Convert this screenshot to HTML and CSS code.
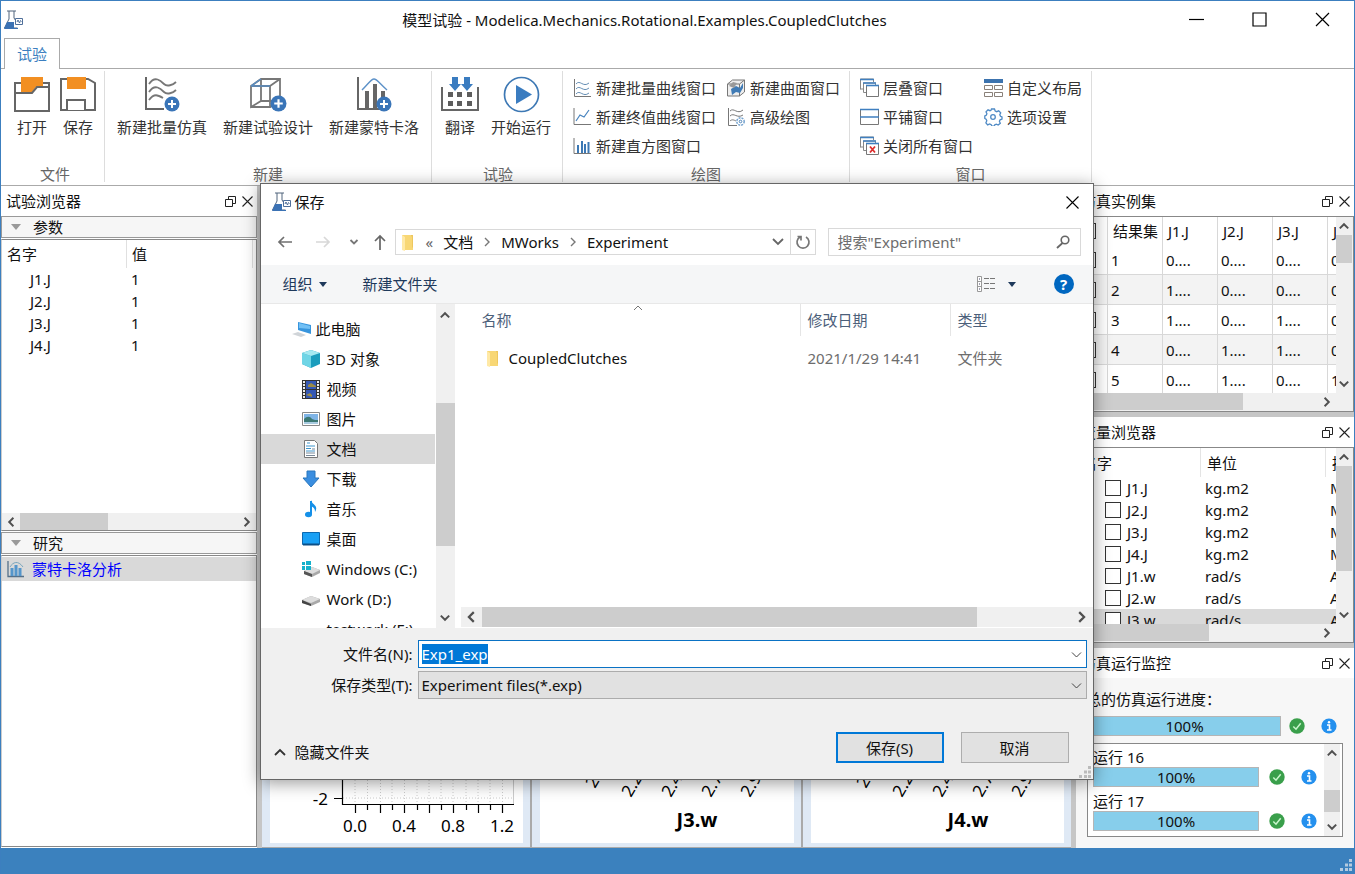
FILE: index.html
```html
<!DOCTYPE html>
<html lang="zh-CN">
<head>
<meta charset="utf-8">
<title>模型试验</title>
<link rel="stylesheet" href="styles.css">
</head>
<body>
<svg class="defs" aria-hidden="true">
  <symbol id="flask" viewBox="0 0 20 20">
    <path d="M4 1h9M6 1v8L1.5 18h13" fill="none" stroke="#51657d"/>
    <path d="M11 1v7l2 3" fill="none" stroke="#51657d"/>
    <path d="M4 12h7v6h4v1H1z" fill="#3b72b4"/>
    <path d="M12.500 8.500h7v6h-7z" fill="#fff" stroke="#4f6f9a"/>
    <path d="M14 12l1-2 1.500 3 1-2.500 1 1" fill="none" stroke="#4f6f9a"/>
  </symbol>
  <symbol id="plus" viewBox="0 0 16 16"><circle cx="8" cy="8" r="7.500" fill="#3a75b8"/><path d="M8 4v8M4 8h8" stroke="#fff" stroke-width="2"/></symbol>
  <symbol id="up" viewBox="0 0 10 10"><path d="M1.500 7L5 3.500 8.500 7" fill="none" stroke="#505050" stroke-width="1.600"/></symbol>
  <symbol id="down" viewBox="0 0 10 10"><path d="M1.500 3L5 6.500 8.500 3" fill="none" stroke="#505050" stroke-width="1.600"/></symbol>
  <symbol id="left" viewBox="0 0 10 10"><path d="M7 1.500L3.500 5 7 8.500" fill="none" stroke="#505050" stroke-width="1.600"/></symbol>
  <symbol id="right" viewBox="0 0 10 10"><path d="M3 1.500L6.500 5 3 8.500" fill="none" stroke="#505050" stroke-width="1.600"/></symbol>
  <symbol id="float" viewBox="0 0 11 11"><path d="M.5 3.500h7v7h-7zM3.500 3.500v-3h7v7h-3" fill="none" stroke="#222"/></symbol>
  <symbol id="close" viewBox="0 0 11 11"><path d="M.5.5l10 10M10.500.5l-10 10" fill="none" stroke="#222" stroke-width="1.100"/></symbol>
  <symbol id="folder" viewBox="0 0 13 17"><path d="M1 1h8l3 2v13H1z" fill="#f8d775"/><path d="M1 1l3 2v14l-3-1z" fill="#ffe9a6"/><path d="M9 1h3v13l-1-1V3z" fill="#eec75e"/></symbol>
  <symbol id="ok" viewBox="0 0 16 16"><circle cx="8" cy="8" r="7.700" fill="#3a9f4b"/><path d="M4.300 8.500l2.700 2.700 4.700-6" fill="none" stroke="#c9f5cc" stroke-width="1.500"/></symbol>
  <symbol id="info" viewBox="0 0 16 16"><circle cx="8" cy="8" r="7.600" fill="#2490ee"/><path d="M6 7h2.500v5M6 12h4.500" fill="none" stroke="#fff" stroke-width="1.600"/><circle cx="8" cy="4.300" r="1.200" fill="#fff"/></symbol>
  <symbol id="waves" viewBox="0 0 18 18"><path d="M1.500 0v17.500H18" fill="none" stroke="#777"/><path d="M3 5c4-5 7 4 13-1M3 10c4-5 7 4 13-1M3 15c4-5 7 4 13-1" fill="none" stroke="#668fb5"/></symbol>
  <symbol id="cascade" viewBox="0 0 19 19"><path d="M.5 11.500V1h13v3M3.500 14.500V5h12v2M.5 11h3M3.500 14.500h3" fill="none" stroke="#888"/><path d="M0 1.500h14M3 5h13" stroke="#3f7fc0" stroke-width="1.600"/><path d="M6.500 8v10.500h12V8" fill="#fff" stroke="#777"/><path d="M6 7.500h13" stroke="#3f7fc0" stroke-width="1.600"/></symbol>
  <symbol id="grip" viewBox="0 0 12 12"><path d="M9 0h3v3H9zM5 4.500h3v3H5zM9 4.500h3v3H9zM0 9h3v3H0zM5 9h3v3H5zM9 9h3v3H9z"/></symbol>
</svg>

<header class="titlebar">
  <svg class="app-icon" width="20" height="20"><use href="#flask"/></svg>
  <h1 class="title">模型试验 - Modelica.Mechanics.Rotational.Examples.CoupledClutches</h1>
  <div class="win-buttons">
    <button aria-label="最小化"><svg width="15" height="15"><path d="M0 7.500h15" stroke="#000" stroke-width="1.200"/></svg></button>
    <button aria-label="最大化"><svg width="15" height="15"><path d="M1 1h13v13H1z" fill="none" stroke="#000" stroke-width="1.200"/></svg></button>
    <button aria-label="关闭"><svg width="15" height="15"><path d="M1 1l13 13M14 1L1 14" stroke="#000" stroke-width="1.200"/></svg></button>
  </div>
</header>
<nav class="tabs"><a class="tab" href="#ribbon">试验</a></nav>

<section class="ribbon" id="ribbon">
  <div class="group g-file">
    <div class="big-row">
      <button class="big"><svg width="36" height="37"><path d="M1 7h34v28H1z" fill="#fff" stroke="#666" stroke-width="2"/><path d="M7 1h22v10h-7l-5 6H7z" fill="#f28f22"/><path d="M1 17h17l5-6h12" fill="none" stroke="#666" stroke-width="2"/></svg>打开</button>
      <button class="big"><svg width="38" height="37"><path d="M2 3h27l7 4v27H2z" fill="#fff" stroke="#666" stroke-width="2"/><path d="M8 1h19v12H8z" fill="#f28f22"/><path d="M8 34V24h18v10" fill="#fff" stroke="#666" stroke-width="2"/></svg>保存</button>
    </div>
    <div class="group-name">文件</div>
  </div>
  <div class="group g-new">
    <div class="big-row">
      <button class="big"><svg width="36" height="37"><path d="M2 1v32h18" fill="none" stroke="#666" stroke-width="2"/><path d="M5 8C11-1 17 5 20 8s9 1 12-2M5 16C11 7 17 13 20 16s9 1 12-2M5 24c5-7 9-5 14-2" fill="none" stroke="#777" stroke-width="1.800"/><use href="#plus" x="20" y="20" width="16" height="16"/></svg>新建批量仿真</button>
      <button class="big"><svg width="38" height="37"><path d="M2 10l10-7h19v22H12L2 31zM2 10h19v21H2M21 10l10-7M12 3v22L2 31M21 31l10-6" fill="none" stroke="#777" stroke-width="1.800"/><path d="M2 10l10-7M2 10h19" stroke="#598dc2" stroke-width="1.500"/><use href="#plus" x="21" y="19" width="17" height="17"/></svg>新建试验设计</button>
      <button class="big"><svg width="36" height="37"><path d="M2 1v32h22" fill="none" stroke="#666" stroke-width="2"/><path d="M11 15v18M19 8v25M27 15v14" stroke="#666" stroke-width="4"/><path d="M6 14C13 7 15 3 18 3s5 4 13 11" fill="none" stroke="#5c91c8" stroke-width="1.400"/><use href="#plus" x="20" y="20" width="16" height="16"/></svg>新建蒙特卡洛</button>
    </div>
    <div class="group-name">新建</div>
  </div>
  <div class="group g-run">
    <div class="big-row">
      <button class="big"><svg width="38" height="37"><path d="M1 11v23h36V11" fill="none" stroke="#666" stroke-width="2"/><path d="M7 16h5v5H7zM16 16h5v5h-5zM26 16h5v5h-5zM7 25h5v5H7zM16 25h5v5h-5zM26 25h5v5h-5z" fill="#5d5d5d"/><path d="M11 1h6v7h3l-6 7-6-7h3zM23 1h6v7h3l-6 7-6-7h3z" fill="#3a7cc0"/></svg>翻译</button>
      <button class="big wide"><svg width="37" height="37"><circle cx="18.500" cy="18.500" r="17" fill="#fff" stroke="#3d78b4" stroke-width="1.700"/><path d="M13 9l16 9.500L13 28z" fill="#3a7cc0"/></svg>开始运行</button>
    </div>
    <div class="group-name">试验</div>
  </div>
  <div class="group g-plot">
    <div class="small-grid">
      <button class="small"><svg width="18" height="18"><use href="#waves"/></svg>新建批量曲线窗口</button>
      <button class="small"><svg width="18" height="18"><path d="M.5 5l5-4h12v12l-5 4H.5zM.5 5h12v12M12.500 5l5-4" fill="#eee" stroke="#777"/><path d="M4 10l5-3 4 2 3-5v5l-3 5-4-1-4 3z" fill="#407bb5"/><path d="M2 7l4-4 4 1-3 5z" fill="#999"/></svg>新建曲面窗口</button>
      <button class="small"><svg width="18" height="18"><path d="M1 0v16.500h17" fill="none" stroke="#777"/><path d="M3 13l4-6 4 2 5-7" fill="none" stroke="#4783be" stroke-width="1.200"/></svg>新建终值曲线窗口</button>
      <button class="small"><svg width="18" height="18"><path d="M1.500 0v17.500H10" fill="none" stroke="#777"/><path d="M3 3c4-4 7 4 13-1M3 8c4-4 7 3 13-1M3 13c2-2 4-1 6 0" fill="none" stroke="#777"/><circle cx="13.500" cy="13.500" r="3.700" fill="#fff" stroke="#75a3cf" stroke-width="1.500" stroke-dasharray="2 1"/><circle cx="13.500" cy="13.500" r="1.300" fill="none" stroke="#4d83b8"/></svg>高级绘图</button>
      <button class="small"><svg width="18" height="18"><path d="M1 1v15.500h17" fill="none" stroke="#777"/><path d="M5 8v8M9 4v12M12 7v9M15.500 5v11" stroke="#3c78b4" stroke-width="2"/></svg>新建直方图窗口</button>
    </div>
    <div class="group-name">绘图</div>
  </div>
  <div class="group g-window">
    <div class="small-grid">
      <button class="small"><svg width="19" height="19"><use href="#cascade"/></svg>层叠窗口</button>
      <button class="small"><svg width="19" height="18"><path d="M0 0h19v4H0z" fill="#3c73ae"/><path d="M.5 6.500h8v4h-8zM10.500 6.500h8v4h-8zM.5 13.500h8v4h-8zM10.500 13.500h8v4h-8z" fill="#fff" stroke="#8a8179"/></svg>自定义布局</button>
      <button class="small"><svg width="19" height="18"><path d="M.5 1.500h18v15H.5z" fill="#fff" stroke="#777"/><path d="M0 1.500h19M0 9h19" stroke="#3f7fc0" stroke-width="1.600"/></svg>平铺窗口</button>
      <button class="small"><svg width="19" height="18"><path d="M7.500 1h3l.7 2 1.500.7 2-.9 2 2.100-.9 1.900.7 1.500 1.500.7v2l-1.900.8-.7 1.500.9 2-2.100 1.700-1.900-.9-1.500.7-.8 1.400h-2l-.8-1.500-1.500-.7-2 .9L1.900 14.800l.9-2-.7-1.500L.8 10.500V8l1.400-.8.7-1.500-.9-1.900 2-2 2 .9L7 2.300z" fill="none" stroke="#4f8ac5" stroke-width="1.300"/><circle cx="9" cy="9" r="2.300" fill="none" stroke="#4f8ac5" stroke-width="1.300"/></svg>选项设置</button>
      <button class="small"><svg width="19" height="19"><use href="#cascade" width="19" height="19"/><path d="M10 10.500l5 6M15 10.500l-5 6" stroke="#dc2e2e" stroke-width="1.800"/></svg>关闭所有窗口</button>
    </div>
    <div class="group-name">窗口</div>
  </div>
</section>

<main class="workspace">
  <aside class="left-dock">
    <div class="dock-title"><h2>试验浏览器</h2><button aria-label="浮动"><svg width="11" height="11"><use href="#float"/></svg></button><button aria-label="关闭"><svg width="11" height="11"><use href="#close"/></svg></button></div>
    <button class="section-bar"><svg width="10" height="6"><path d="M0 0h10L5 6z" fill="#999"/></svg>参数</button>
    <div class="pane params">
      <table>
        <colgroup><col class="c-pname"><col class="c-pvalue"></colgroup>
        <thead><tr><th>名字</th><th>值</th></tr></thead>
        <tbody><tr><td>J1.J</td><td>1</td></tr><tr><td>J2.J</td><td>1</td></tr><tr><td>J3.J</td><td>1</td></tr><tr><td>J4.J</td><td>1</td></tr></tbody>
      </table>
      <div class="hbar"><button aria-label="向左"><svg width="12" height="12"><use href="#left"/></svg></button><span class="track"><span class="thumb t-params"></span></span><button aria-label="向右"><svg width="12" height="12"><use href="#right"/></svg></button></div>
    </div>
    <button class="section-bar"><svg width="10" height="6"><path d="M0 0h10L5 6z" fill="#999"/></svg>研究</button>
    <div class="pane study">
      <a class="study-item" href="#study"><svg width="17" height="17"><path d="M1 0v15.500h16" fill="none" stroke="#557089" stroke-width="1.300"/><path d="M5 7v8M9 4v11M13 7v8" stroke="#5596cb" stroke-width="3"/><path d="M3 6c3-5 8-7 13 0" fill="none" stroke="#7aa6bd"/></svg>蒙特卡洛分析</a>
    </div>
  </aside>

  <section class="charts">
    <div class="chart">
      <svg class="plot" width="254" height="75" role="img" aria-label="直方图">
        <g transform="translate(0 12)">
          <path d="M85 0v24M97.500 0v24M110.500 0v24M122 0v24M134.500 0v24M147 0v24M159 0v24M171 0v24M183 0v24M196 0v24M208 0v24M220 0v24M232.500 0v24M73 18h171" stroke="#ccc" stroke-dasharray="1 2"/>
          <path d="M243.500 0v24" stroke="#ccc"/>
          <path d="M72.500 0v24.500H244M64 18.500h8M85.500 25v8M97.500 25v5M110.500 25v8M122.500 25v5M134.500 25v8M147.500 25v5M159.500 25v8M171.500 25v5M183.500 25v8M196.500 25v5M208.500 25v8M220.500 25v5M232.500 25v8" fill="none" stroke="#000" stroke-width="1.200"/>
          <g class="axis-text"><text x="58" y="25" text-anchor="end">-2</text></g>
          <g class="axis-text" text-anchor="middle"><text x="85" y="52">0.0</text><text x="134" y="52">0.4</text><text x="183" y="52">0.8</text><text x="232" y="52">1.2</text></g>
        </g>
      </svg>
    </div>
    <div class="chart">
      <svg class="plot" width="254" height="75" role="img" aria-label="J3.w">
        <g class="axis-text"><text transform="translate(55 21) rotate(-60)">2.</text><text transform="translate(91 30) rotate(-60)">2.2</text><text transform="translate(131 30) rotate(-60)">2.4</text><text transform="translate(171 30) rotate(-60)">2.7</text><text transform="translate(210 30) rotate(-60)">2.9</text></g>
        <text class="chart-name" x="157" y="59" text-anchor="middle">J3.w</text>
      </svg>
    </div>
    <div class="chart">
      <svg class="plot" width="254" height="75" role="img" aria-label="J4.w">
        <g class="axis-text"><text transform="translate(55 21) rotate(-60)">2.</text><text transform="translate(91 30) rotate(-60)">2.2</text><text transform="translate(131 30) rotate(-60)">2.4</text><text transform="translate(171 30) rotate(-60)">2.7</text><text transform="translate(210 30) rotate(-60)">2.9</text></g>
        <text class="chart-name" x="157" y="59" text-anchor="middle">J4.w</text>
      </svg>
    </div>
  </section>

  <aside class="right-dock">
    <section class="dock">
      <div class="dock-title"><h2>仿真实例集</h2><button aria-label="浮动"><svg width="11" height="11"><use href="#float"/></svg></button><button aria-label="关闭"><svg width="11" height="11"><use href="#close"/></svg></button></div>
      <div class="scroll-pane">
        <div class="view">
          <table class="instances">
            <colgroup><col class="c-check"><col class="c-cell" span="5"></colgroup>
            <thead><tr><th><input type="checkbox" aria-label="全选"></th><th>结果集</th><th>J1.J</th><th>J2.J</th><th>J3.J</th><th>J4.J</th></tr></thead>
            <tbody>
              <tr><td><input type="checkbox" aria-label="1"></td><td>1</td><td>0....</td><td>0....</td><td>0....</td><td>0....</td></tr>
              <tr><td><input type="checkbox" aria-label="2"></td><td>2</td><td>1....</td><td>0....</td><td>0....</td><td>0....</td></tr>
              <tr><td><input type="checkbox" aria-label="3"></td><td>3</td><td>1....</td><td>0....</td><td>1....</td><td>0....</td></tr>
              <tr><td><input type="checkbox" aria-label="4"></td><td>4</td><td>0....</td><td>1....</td><td>1....</td><td>0....</td></tr>
              <tr><td><input type="checkbox" aria-label="5"></td><td>5</td><td>0....</td><td>1....</td><td>0....</td><td>1....</td></tr>
            </tbody>
          </table>
        </div>
        <div class="vbar"><button aria-label="向上"><svg width="12" height="12"><use href="#up"/></svg></button><span class="track"><span class="thumb t-inst-v"></span></span><button aria-label="向下"><svg width="12" height="12"><use href="#down"/></svg></button></div>
        <div class="hbar"><button aria-label="向左"><svg width="12" height="12"><use href="#left"/></svg></button><span class="track"><span class="thumb t-inst-h"></span></span><button aria-label="向右"><svg width="12" height="12"><use href="#right"/></svg></button></div>
      </div>
    </section>
    <section class="dock">
      <div class="dock-title"><h2>变量浏览器</h2><button aria-label="浮动"><svg width="11" height="11"><use href="#float"/></svg></button><button aria-label="关闭"><svg width="11" height="11"><use href="#close"/></svg></button></div>
      <div class="scroll-pane">
        <div class="view">
          <table class="vars">
            <colgroup><col class="c-var"><col class="c-unit"><col class="c-desc"></colgroup>
            <thead><tr><th>名字</th><th>单位</th><th>描述</th></tr></thead>
            <tbody>
              <tr><td><label><input type="checkbox">J1.J</label></td><td>kg.m2</td><td>M</td></tr>
              <tr><td><label><input type="checkbox">J2.J</label></td><td>kg.m2</td><td>M</td></tr>
              <tr><td><label><input type="checkbox">J3.J</label></td><td>kg.m2</td><td>M</td></tr>
              <tr><td><label><input type="checkbox">J4.J</label></td><td>kg.m2</td><td>M</td></tr>
              <tr><td><label><input type="checkbox">J1.w</label></td><td>rad/s</td><td>A</td></tr>
              <tr><td><label><input type="checkbox">J2.w</label></td><td>rad/s</td><td>A</td></tr>
              <tr class="selected"><td><label><input type="checkbox">J3.w</label></td><td>rad/s</td><td>A</td></tr>
            </tbody>
          </table>
        </div>
        <div class="vbar"><button aria-label="向上"><svg width="12" height="12"><use href="#up"/></svg></button><span class="track"><span class="thumb t-var-v"></span></span><button aria-label="向下"><svg width="12" height="12"><use href="#down"/></svg></button></div>
        <div class="hbar"><button aria-label="向左"><svg width="12" height="12"><use href="#left"/></svg></button><span class="track"><span class="thumb t-var-h"></span></span><button aria-label="向右"><svg width="12" height="12"><use href="#right"/></svg></button></div>
      </div>
    </section>
    <section class="dock monitor">
      <div class="dock-title"><h2>仿真运行监控</h2><button aria-label="浮动"><svg width="11" height="11"><use href="#float"/></svg></button><button aria-label="关闭"><svg width="11" height="11"><use href="#close"/></svg></button></div>
      <div class="total-name">总的仿真运行进度：</div>
      <div class="run total"><div class="progress">100%</div><svg width="16" height="16"><use href="#ok"/></svg><svg width="16" height="16"><use href="#info"/></svg></div>
      <div class="run-list">
        <div class="runs">
          <div class="run-name">运行 16</div>
          <div class="run"><div class="progress">100%</div><svg width="16" height="16"><use href="#ok"/></svg><svg width="16" height="16"><use href="#info"/></svg></div>
          <div class="run-name">运行 17</div>
          <div class="run"><div class="progress">100%</div><svg width="16" height="16"><use href="#ok"/></svg><svg width="16" height="16"><use href="#info"/></svg></div>
        </div>
        <div class="vbar"><button aria-label="向上"><svg width="12" height="12"><use href="#up"/></svg></button><span class="track"><span class="thumb t-run"></span></span><button aria-label="向下"><svg width="12" height="12"><use href="#down"/></svg></button></div>
      </div>
    </section>
  </aside>
</main>
<footer class="statusbar"><svg width="12" height="12" fill="#b4cbe0"><use href="#grip"/></svg></footer>

<div class="dialog" role="dialog" aria-label="保存">
  <div class="dlg-title"><svg width="20" height="20"><use href="#flask"/></svg><h2>保存</h2><button aria-label="关闭"><svg width="13" height="13"><path d="M.5.5l12 12M12.500.5l-12 12" stroke="#000" stroke-width="1.100"/></svg></button></div>
  <div class="dlg-nav">
    <div class="arrows">
      <button aria-label="后退"><svg width="16" height="14"><path d="M15 7H2M7 2L2 7l5 5" fill="none" stroke="#707070" stroke-width="1.700"/></svg></button>
      <button aria-label="前进"><svg width="16" height="14"><path d="M1 7h13M9 2l5 5-5 5" fill="none" stroke="#d8d8d8" stroke-width="1.700"/></svg></button>
      <button aria-label="最近"><svg width="10" height="10"><path d="M1.500 3L5 6.500 8.500 3" fill="none" stroke="#777" stroke-width="1.800"/></svg></button>
      <button aria-label="上一级"><svg width="12" height="16"><path d="M6 16V2M1 7l5-5 5 5" fill="none" stroke="#666" stroke-width="1.700"/></svg></button>
    </div>
    <div class="address">
      <svg width="13" height="17"><use href="#folder"/></svg>
      <span class="crumb-more">«</span>
      <a href="#docs">文档</a><svg class="sep" width="10" height="10"><path d="M3 1l4 4-4 4" fill="none" stroke="#777" stroke-width="1.400"/></svg>
      <a href="#mworks">MWorks</a><svg class="sep" width="10" height="10"><path d="M3 1l4 4-4 4" fill="none" stroke="#777" stroke-width="1.400"/></svg>
      <a href="#experiment">Experiment</a>
      <button class="history" aria-label="历史"><svg width="12" height="10"><path d="M1 2l5 5 5-5" fill="none" stroke="#666" stroke-width="1.800"/></svg></button>
      <button class="refresh" aria-label="刷新"><svg width="16" height="16"><path d="M11 3a6 6 0 1 1-6 0M2.500 2.500H6v4" fill="none" stroke="#777" stroke-width="1.700"/></svg></button>
    </div>
    <div class="search"><input type="text" aria-label="搜索" placeholder='搜索"Experiment"'><svg width="14" height="14"><circle cx="9" cy="5" r="3.800" fill="none" stroke="#666" stroke-width="1.600"/><path d="M6.500 8L1 13" stroke="#666" stroke-width="1.800"/></svg></div>
  </div>
  <div class="dlg-tools">
    <button>组织<svg width="8" height="5"><path d="M0 0h8L4 5z" fill="#1e395b"/></svg></button>
    <button>新建文件夹</button>
    <button class="view-mode" aria-label="视图"><svg width="18" height="16"><path d="M.5.5h4v15h-4zM.5 5.500h4M.5 10.500h4" fill="#fff" stroke="#999"/><path d="M2 3h1M2 8h1M2 13h1" stroke="#446"/><path d="M7 2.500h5M13 2.500h5M7 7.500h5M13 7.500h5M7 12.500h5M13 12.500h5" stroke="#777"/></svg><svg width="8" height="5"><path d="M0 0h8L4 5z" fill="#1e395b"/></svg></button>
    <button class="help" aria-label="帮助">?</button>
  </div>
  <div class="dlg-body">
    <nav class="tree">
      <a class="root" href="#pc"><svg width="20" height="18"><path d="M6 2l13 3v9L6 10z" fill="#3795dd"/><path d="M7 3l11 3v3L7 8z" fill="#72c0f5"/><path d="M0 14l6-2 8 3-5 2z" fill="#d0d4d8"/></svg>此电脑</a>
      <a href="#3d"><svg width="18" height="18"><path d="M9 0l9 3v11l-9 4-9-4V3z" fill="#1a9dbd"/><path d="M0 3l9 3v12l-9-4z" fill="#6fd5e6"/><path d="M9 0l9 3-9 3-9-3z" fill="#a5e9f1"/></svg>3D 对象</a>
      <a href="#video"><svg width="18" height="19"><path d="M0 0h18v19H0z" fill="#333"/><path d="M4 1h10v8H4zM4 10h10v8H4z" fill="#3558b4"/><path d="M6 5l3-2 5 3v1H6zM4 15l4-2 2 2v2z" fill="#9a8b47"/><path d="M2 1v17M16 1v17" stroke="#eee" stroke-width="2" stroke-dasharray="2 1"/></svg>视频</a>
      <a href="#pics"><svg width="18" height="14"><path d="M.5.5h17v13H.5z" fill="#fff" stroke="#888"/><path d="M2 2h14v10H2z" fill="#7fb4e6"/><path d="M2 7c3-3 6-3 8 0 2 1 4 1 6 1v2H2z" fill="#3c7974"/><path d="M2 10h14v2H2z" fill="#a9cbe0"/></svg>图片</a>
      <a class="selected" href="#docs"><svg width="18" height="18"><path d="M2.500.5h10l3 3v14h-13z" fill="#fff" stroke="#777"/><path d="M5 3h3M4 6h9M4 8.500h5M4 11h9" stroke="#3e95cc"/><path d="M10 9h3M4 13h9M4 15.500h9" stroke="#789"/></svg>文档</a>
      <a href="#down"><svg width="18" height="18"><path d="M5 1h8v7h4l-8 9-8-9h4z" fill="#3a8ee0" stroke="#2876bd"/></svg>下载</a>
      <a href="#music"><svg width="18" height="18"><path d="M9 1v13" stroke="#1590e8" stroke-width="2"/><ellipse cx="6.500" cy="14.500" rx="3.500" ry="2.700" fill="#1590e8"/><path d="M9 0c1 5 8 5 4 12 0-4-2-5-4-6z" fill="#1590e8"/></svg>音乐</a>
      <a href="#desktop"><svg width="18" height="14"><path d="M.5.5h17v12H.5z" fill="#19a0f5" stroke="#0b68b0"/><path d="M1 12.500h16" stroke="#0c4f87" stroke-width="2"/></svg>桌面</a>
      <a href="#c"><svg width="18" height="16"><path d="M2 10l8-4 8 3v3l-8 4-8-3z" fill="#a8a8a8"/><path d="M2 10l8-4 8 3-8 4z" fill="#ddd"/><path d="M2 10l8 3v3l-8-3z" fill="#555"/><path d="M0 1h3v3H0zM4 0h5v4H4zM0 5h3v4H0zM4 5h5v4H4z" fill="#16b1cc"/></svg>Windows (C:)</a>
      <a href="#d"><svg width="18" height="16"><path d="M0 9l9-4 9 3v3l-9 4-9-3z" fill="#a8a8a8"/><path d="M0 9l9-4 9 3-9 4z" fill="#ddd"/><path d="M0 9l9 4v2l-9-3z" fill="#444"/></svg>Work (D:)</a>
      <a href="#e"><svg width="18" height="16"></svg>testwork (E:)</a>
    </nav>
    <div class="vbar wide-bar"><button aria-label="向上"><svg width="12" height="12"><use href="#up"/></svg></button><span class="track"><span class="thumb t-tree"></span></span><button aria-label="向下"><svg width="12" height="12"><use href="#down"/></svg></button></div>
    <div class="files">
      <svg class="sort" width="10" height="6"><path d="M1 5l4-4 4 4" fill="none" stroke="#777"/></svg>
      <table>
        <colgroup><col class="c-fname"><col class="c-date"><col class="c-type"></colgroup>
        <thead><tr><th>名称</th><th>修改日期</th><th>类型</th></tr></thead>
        <tbody><tr><td><span class="fname"><svg width="13" height="17"><use href="#folder"/></svg>CoupledClutches</span></td><td>2021/1/29 14:41</td><td>文件夹</td></tr></tbody>
      </table>
      <div class="hbar wide-bar"><button aria-label="向左"><svg width="14" height="14"><use href="#left"/></svg></button><span class="track"><span class="thumb t-files"></span></span><button aria-label="向右"><svg width="14" height="14"><use href="#right"/></svg></button></div>
    </div>
  </div>
  <form class="dlg-foot">
    <label for="fname">文件名(N):</label>
    <div class="field"><input id="fname" type="text" value="Exp1_exp" spellcheck="false" autocomplete="off"><svg width="11" height="8"><path d="M1 1.500l4.500 4.500L10 1.500" fill="none" stroke="#444"/></svg></div>
    <label for="ftype">保存类型(T):</label>
    <div class="field type"><select id="ftype"><option>Experiment files(*.exp)</option></select><svg width="11" height="8"><path d="M1 1.500l4.500 4.500L10 1.500" fill="none" stroke="#444"/></svg></div>
    <div class="actions">
      <button type="button" class="hide"><svg width="12" height="8"><path d="M1 7l5-5 5 5" fill="none" stroke="#333" stroke-width="1.800"/></svg>隐藏文件夹</button>
      <button type="button" class="btn primary">保存(S)</button>
      <button type="button" class="btn">取消</button>
    </div>
  </form>
  <svg class="dlg-grip" width="12" height="12" fill="#bbb"><use href="#grip"/></svg>
</div>
<script src="main.js"></script>
</body>
</html>
```
FILE: main.js
```js
const nameBox = document.getElementById('fname');
nameBox.focus();
nameBox.select();
```
FILE: styles.css
```css
* { box-sizing: border-box; }
body {
  margin: 0;
  height: 100vh;
  display: flex;
  flex-direction: column;
  overflow: hidden;
  position: relative;
  border: 1px solid #3c7fbf;
  border-bottom: 0;
  background: #fff;
  color: #111;
  font: 15px/20px "Noto Sans", "Noto Sans CJK SC", sans-serif;
}
button, input, select { font: inherit; color: inherit; margin: 0; padding: 0; border: 0; background: none; border-radius: 0; }
h1, h2 { margin: 0; font-size: 15px; font-weight: 400; }
a { color: inherit; text-decoration: none; }
svg { display: block; flex: none; }
table { border-collapse: separate; border-spacing: 0; table-layout: fixed; }
th { font-weight: 400; text-align: left; }
.defs { position: absolute; width: 0; height: 0; }

.titlebar { flex: none; height: 37px; display: grid; grid-template-columns: 189px 1fr 189px; align-items: center; }
.app-icon { margin-left: 2px; }
.title { text-align: center; padding-right: 66px; white-space: nowrap; }
.win-buttons { display: flex; }
.win-buttons button { width: 63px; height: 34px; display: grid; place-items: center; }

.tabs { flex: none; height: 31px; border-bottom: 1px solid #aaa; display: flex; padding-left: 3px; }
.tab { height: 31px; width: 56px; border: 1px solid #aaa; border-bottom: 0; background: #fff; color: #3c7fc0; text-align: center; line-height: 31px; }

.ribbon { flex: none; height: 117px; border-bottom: 1px solid #aaa; display: flex; color: #333; padding: 2px 0; }
.group { border-right: 1px solid #ddd; display: flex; flex-direction: column; justify-content: space-between; height: 111px; padding-top: 5px; }
.g-file { padding-left: 8px; padding-right: 3px; }
.g-new { padding-left: 4px; padding-right: 4px; }
.g-run { padding-left: 5px; padding-right: 3px; }
.g-plot, .g-window { padding: 5px 10px 0; }
.big-row { display: flex; }
.big { width: 46px; display: flex; flex-direction: column; align-items: center; gap: 4px; white-space: nowrap; }
.big.wide { width: 76px; }
.g-new .big { width: 106px; }
.group-name { text-align: center; color: #666; line-height: 16px; }
.small-grid { display: grid; grid-template-columns: 154px 112px; grid-auto-rows: 29px; margin-top: -3px; }
.g-window .small-grid { grid-template-columns: 124px 97px; }
.small { display: flex; align-items: center; gap: 5px; white-space: nowrap; }
.g-window .small { gap: 4px; }

.workspace { flex: 1; min-height: 0; display: grid; grid-template-columns: 256px minmax(0, 1fr) 278px; grid-template-rows: minmax(0, 1fr); gap: 5px; background: #c6c6c6; }
.dock-title { height: 30px; flex: none; display: flex; align-items: center; gap: 6px; padding: 0 4px 0 5px; background: #fff; }
.dock-title h2 { flex: 1; }
.left-dock { display: grid; grid-template-rows: 30px 22px minmax(0, 294fr) 22px minmax(0, 294fr); background: #fff; }
.section-bar { border: 1px solid #999; background: #f6f6f6; display: flex; align-items: center; gap: 12px; padding-left: 9px; line-height: 20px; }
.pane { margin-top: 1px; margin-bottom: 1px; border: 1px solid #888; border-left-color: #ccc; display: flex; flex-direction: column; min-height: 0; }
.study { padding-top: 1px; }
.params table { width: 251px; flex: none; }
.params .hbar { margin-top: auto; }
.params th { height: 28px; padding: 0 0 0 5px; border-right: 1px solid #e0e0e0; }
.params td { height: 22px; padding: 0 0 0 28px; line-height: 20px; }
.params td + td { padding-left: 4px; }
.c-pname { width: 125px; }
.study-item { height: 24px; background: #d9d9d9; color: #00f; display: flex; align-items: center; gap: 8px; padding-left: 5px; }

.hbar, .vbar { background: #f0f0f0; display: flex; flex: none; }
.hbar { height: 17px; }
.vbar { width: 16px; flex-direction: column; }
.hbar button { width: 18px; display: grid; place-items: center; }
.vbar button { height: 18px; display: grid; place-items: center; }
.track { flex: 1; display: flex; }
.vbar .track { flex-direction: column; }
.thumb { background: #cdcdcd; }
.t-params { width: 88px; }
.t-inst-v { height: 28px; }
.t-inst-h { width: 149px; }
.t-var-v { height: 105px; }
.t-var-h { width: 115px; }
.t-run { height: 22px; margin-top: 28px; }
.t-tree { height: 143px; margin-top: 78px; }
.t-files { width: 495px; }

.charts { display: grid; grid-template-columns: repeat(3, 1fr); gap: 2px; background: #aaa; padding-bottom: 1px; }
.chart { background: #dfe9f5; padding: 4px 7px 4px 8px; display: flex; }
.plot { align-self: flex-end; background: #fff; width: 100%; }
.axis-text { font-size: 17px; }
.chart-name { font-size: 20px; font-weight: 700; }

.right-dock { display: grid; grid-template-rows: minmax(0, 226fr) minmax(0, 226fr) minmax(0, 200fr); gap: 5px; }
.dock { background: #fff; display: flex; flex-direction: column; min-height: 0; }
.scroll-pane { flex: 1; min-height: 0; border: 1px solid #888; border-left: 0; display: grid; grid-template-columns: minmax(0, 1fr) 17px; grid-template-rows: minmax(0, 1fr) 18px; background: #f0f0f0; }
.view { overflow: hidden; background: #fff; }
.scroll-pane .vbar { grid-column: 2; }
.scroll-pane .hbar { grid-column: 1; }
input[type="checkbox"] { appearance: none; width: 16px; height: 16px; border: 1px solid #333; background: #fff; display: block; flex: none; }
.instances, .vars { width: 307px; }
.c-check { width: 32px; }
.c-cell { width: 55px; }
.instances th { height: 28px; padding: 0 0 0 5px; border-right: 1px solid #d8d8d8; white-space: nowrap; }
.instances td { height: 30px; padding: 0 0 0 3px; border-right: 1px solid #d8d8d8; border-bottom: 1px solid #d8d8d8; white-space: nowrap; }
.instances tr:nth-child(even) td { background: #f3f3f3; }
.instances th:first-child, .instances td:first-child { padding-left: 4px; }
.c-var { width: 125px; }
.c-unit { width: 125px; }
.vars th { height: 29px; padding: 0 0 0 6px; border-right: 1px solid #e4e4e4; }
.vars td { height: 22px; padding: 0 0 0 4px; line-height: 22px; }
.vars td:first-child { padding-left: 29px; }
.vars label { display: flex; align-items: center; gap: 6px; }
.vars .selected td { background: #d9d9d9; }

.monitor { background: #f7f7f7; }
.total-name { padding: 11px 0 0 10px; }
.run { display: flex; align-items: center; gap: 16px; }
.run.total { padding: 7px 17px 7px 12px; }
.progress { flex: 1; height: 20px; background: #87ceeb; border: 1px solid #b5b5b5; text-align: center; line-height: 18px; }
.run.total .progress { margin-right: -8px; }
.run-list { margin: 0 11px; border: 1px solid #888; background: #fff; display: flex; height: 94px; padding-right: 2px; }
.runs { flex: 1; padding: 3px 7px 0 5px; }
.runs .progress { margin-right: -6px; }
.runs .run + .run-name { margin-top: 4px; }

.statusbar { flex: none; height: 26px; background: #3b81be; margin: 0 -1px; display: flex; justify-content: flex-end; align-items: flex-end; padding: 3px; }

.dialog { position: absolute; left: 50%; top: 182px; width: 834px; margin-left: -418px; border: 1px solid #666; background: #fff; box-shadow: 0 3px 16px rgba(0, 0, 0, .4); color: #111; }
.dlg-title { height: 36px; display: flex; align-items: center; gap: 4px; padding: 0 14px 0 10px; }
.dlg-title h2 { flex: 1; }
.dlg-nav { height: 45px; display: grid; grid-template-columns: 110px 1fr 253px; column-gap: 12px; align-items: center; padding: 0 12px 1px; }
.arrows { display: flex; align-items: center; gap: 22px; padding-left: 4px; }
.arrows button + button + button { margin-left: -4px; }
.arrows button + button + button + button { margin-left: -7px; }
.address { height: 26px; border: 1px solid #d9d9d9; display: flex; align-items: center; padding-left: 5px; color: #111; line-height: 24px; }
.address .sep { margin: 0 9px; }
.crumb-more { color: #666; margin: 0 10px 0 12px; }
.history { margin-left: auto; width: 24px; height: 24px; display: grid; place-items: center; }
.refresh { width: 25px; height: 24px; border-left: 1px solid #d9d9d9; display: grid; place-items: center; }
.search { height: 28px; border: 1px solid #d9d9d9; display: flex; align-items: center; padding: 0 10px 0 9px; }
.search input { flex: 1; min-width: 0; outline: 0; }
.search input::placeholder { color: #6d6d6d; opacity: 1; }
.dlg-tools { height: 39px; background: #f5f6f7; border-bottom: 1px solid #e8e8e8; display: flex; align-items: center; padding: 0 19px 0 22px; color: #1e395b; }
.dlg-tools button { display: flex; align-items: center; gap: 6px; margin-right: 36px; }
.dlg-tools .view-mode { margin-left: auto; gap: 13px; }
.dlg-tools .help { width: 20px; height: 20px; border-radius: 50%; background: #0067c0; color: #fff; font-weight: 700; justify-content: center; margin-right: 0; margin-left: 2px; }
.dlg-body { height: 324px; display: flex; }
.tree { width: 175px; padding-top: 10px; overflow: hidden; white-space: nowrap; }
.tree a { height: 30px; display: flex; align-items: center; gap: 7px; padding-left: 41px; margin-right: 1px; }
.tree .root { padding-left: 31px; gap: 4px; }
.tree .selected { background: #d9d9d9; }
.vbar.wide-bar { width: 19px; }
.vbar.wide-bar button { height: 21px; }
.files { flex: 1; min-width: 0; display: flex; flex-direction: column; padding-left: 6px; position: relative; }
.files table { width: 100%; }
.files th { height: 32px; color: #4c607a; padding: 0 0 0 7px; border-right: 1px solid #e5e5e5; }
.files th:first-child { padding-left: 21px; }
.files th:last-child { border-right: 0; }
.files td { height: 44px; padding: 0 0 0 7px; color: #6d6d6d; }
.fname { display: flex; align-items: center; gap: 10px; color: #111; padding-left: 18px; }
.c-fname { width: 340px; }
.c-date { width: 150px; }
.sort { position: absolute; left: 178px; top: 1px; }
.hbar.wide-bar { height: 20px; margin-top: auto; margin-bottom: 1px; }
.hbar.wide-bar button { width: 21px; }
.dlg-foot { background: #f0f0f0; height: 151px; padding: 12px 6px 0 12px; display: grid; grid-template-columns: 140px 1fr; grid-template-rows: 28px 28px 1fr; row-gap: 3px; column-gap: 5px; align-items: center; }
.dlg-foot label { text-align: right; }
.field { height: 28px; border: 1px solid #0a72c4; background: #fff; position: relative; display: flex; }
.field.type { border-color: #acacac; background: #e1e1e1; }
.field input, .field select { flex: 1; appearance: none; outline: 0; padding-left: 3px; line-height: 20px; }
.field input { height: 20px; align-self: center; }
.field svg { position: absolute; right: 4px; top: 10px; }
.field input::selection { background: #0078d7; color: #fff; }
.actions { grid-column: 1 / -1; display: flex; align-items: center; gap: 17px; padding-right: 18px; align-self: start; margin-top: 30px; }
.hide { display: flex; align-items: center; gap: 9px; padding-left: 1px; padding-top: 8px; margin-right: auto; }
.btn { width: 108px; height: 31px; border: 1px solid #adadad; background: #e1e1e1; }
.btn.primary { border: 2px solid #0078d7; }
.dlg-grip { position: absolute; right: 2px; bottom: 1px; }
```
